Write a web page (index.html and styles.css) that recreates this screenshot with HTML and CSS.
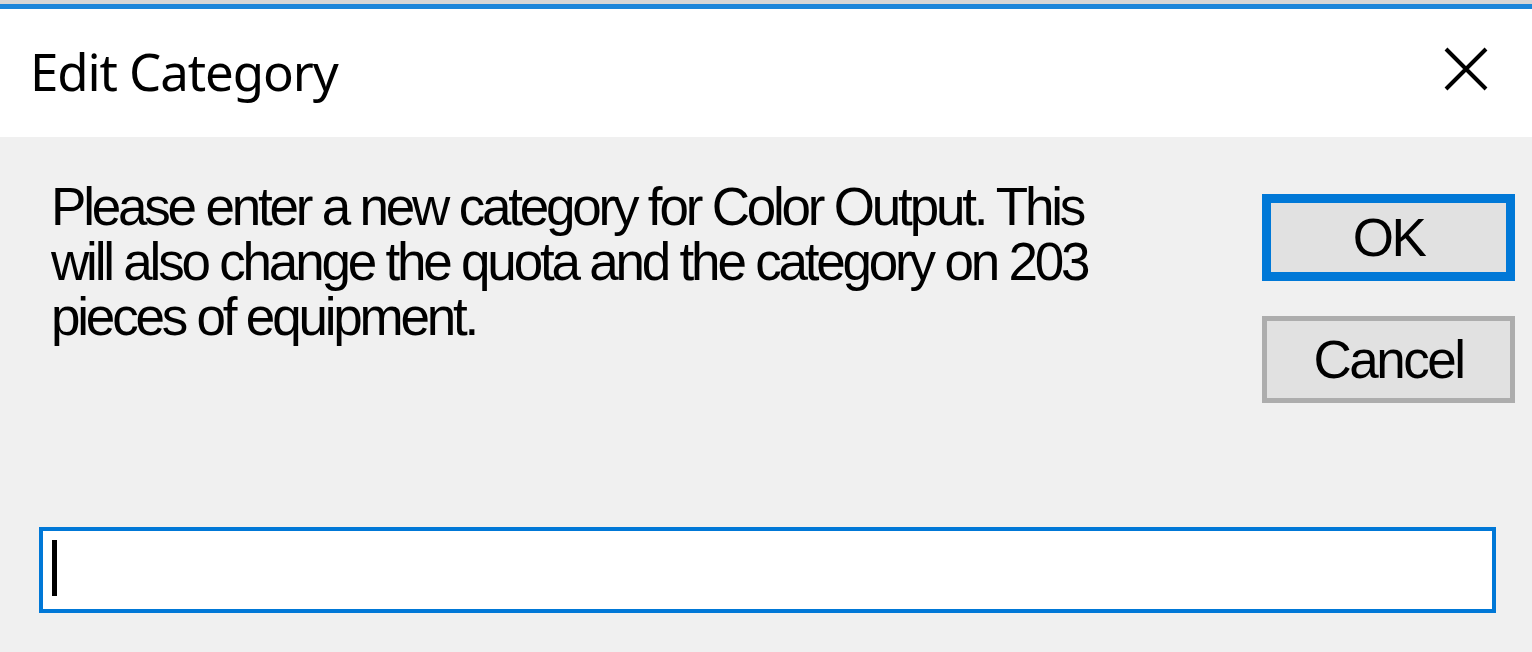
FILE: index.html
```html
<!DOCTYPE html>
<html>
<head>
<meta charset="utf-8">
<link rel="stylesheet" href="styles.css">
</head>
<body>
<div class="window">
  <div class="topstrip"></div>
  <div class="accent"></div>
  <div class="titlebar">
    <div class="title">Edit Category</div>
    <svg class="close" width="44" height="44" viewBox="0 0 44 44">
      <path d="M2 2 L42 42 M42 2 L2 42" stroke="#000" stroke-width="4" fill="none"/>
    </svg>
  </div>
  <div class="content">
    <div class="top">
      <p class="message">Please enter a new category for Color Output. This<br>will also change the quota and the category on 203<br>pieces of equipment.</p>
      <div class="buttons">
        <div class="btn btn-default"><span>OK</span></div>
        <div class="btn"><span>Cancel</span></div>
      </div>
    </div>
    <div class="input"><div class="caret"></div></div>
  </div>
</div>
</body>
</html>
```
FILE: styles.css
```css
html, body {
  margin: 0;
  padding: 0;
}
body {
  width: 1532px;
  height: 652px;
  overflow: hidden;
  background: #f0f0f0;
}
.window {
  display: flex;
  flex-direction: column;
  height: 652px;
}
.topstrip {
  height: 4px;
  background: #d6d6d6;
}
.accent {
  height: 5px;
  background: #1c86da;
}
.titlebar {
  height: 128px;
  background: #ffffff;
  display: flex;
  align-items: center;
  justify-content: space-between;
  padding: 0 44px 0 30px;
}
.title {
  font-family: "Noto Sans", "Open Sans", sans-serif;
  font-size: 51px;
  letter-spacing: -1.1px;
  color: #000;
  margin-top: -4px;
}
.close {
  margin-top: -8px;
}
.content {
  flex: 1;
  display: flex;
  flex-direction: column;
  padding: 0 36px 0 39px;
}
.top {
  display: flex;
  justify-content: space-between;
  height: 390px;
}
.message {
  margin: 42px 0 0 12px;
  font-family: "Liberation Sans", Arial, sans-serif;
  font-size: 53px;
  letter-spacing: -3.2px;
  line-height: 55px;
  color: #000;
}
.buttons {
  display: flex;
  flex-direction: column;
  gap: 35px;
  margin-top: 57px;
  margin-right: -19px;
  width: 253px;
}
.btn {
  box-sizing: border-box;
  height: 87px;
  background: #e1e1e1;
  border: 5px solid #adadad;
  display: flex;
  align-items: center;
  justify-content: center;
  font-family: "Liberation Sans", Arial, sans-serif;
  font-size: 53px;
  letter-spacing: -2.5px;
  color: #000;
}
.btn-default {
  border: 9px solid #0078d7;
}
.input {
  box-sizing: border-box;
  height: 86px;
  background: #fff;
  border: 4px solid #0078d7;
  padding: 9px 0 0 9px;
}
.caret {
  width: 5px;
  height: 56px;
  background: #000;
}
```
